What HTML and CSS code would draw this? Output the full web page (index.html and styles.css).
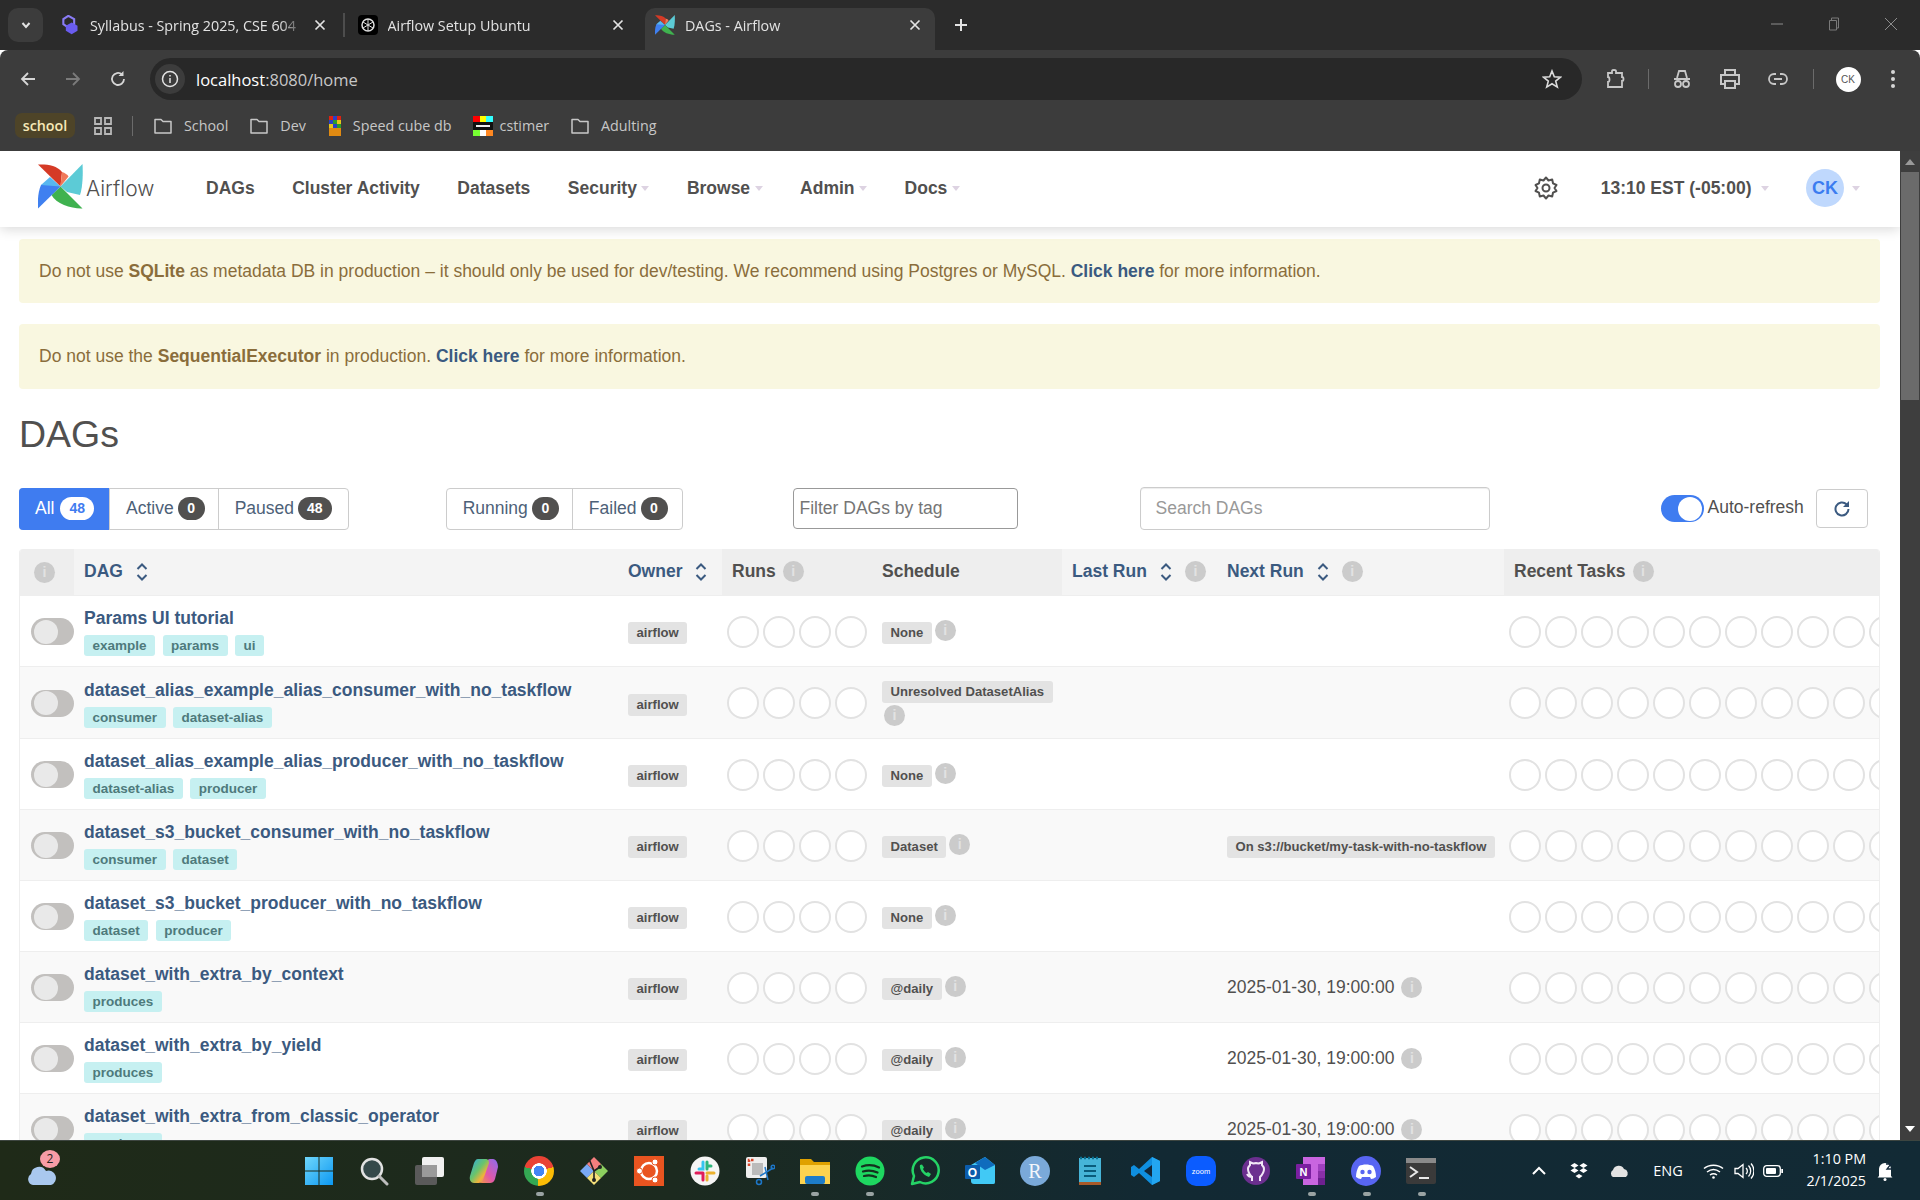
FILE: index.html
```html
<!DOCTYPE html>
<html lang="en">
<head>
    <meta charset="UTF-8">
    <title>DAGs - Airflow</title>
    <link rel="stylesheet" href="styles.css">
</head>
<body>
<svg class="defs" width="0" height="0">
    <defs>
        <symbol id="pinwheel" viewBox="0 0 45 45">
            <path d="M0 0.500C8 0 19 1 24 8L22.500 22.500Z" fill="#d53a26"/>
            <path d="M24 8C27 9 29.500 10.500 30.500 12.500L22.500 22.500Z" fill="#f0795a"/>
            <path d="M44.500 0L22.500 22.500L29 28L42 31C45 22 45 8 44.500 0Z" fill="#5ccbd6"/>
            <path d="M44.500 44.500L22.500 22.500L13.500 31C18 40 34 45 44.500 44.500Z" fill="#3fb24f"/>
            <path d="M0 44.500L22.500 22.500L12 18L3 21C0 28 -0.500 37 0 44.500Z" fill="#3f80f0"/>
            <path d="M3 21L12 13L22.500 22.500Z" fill="#58b7f0"/>
        </symbol>
        <symbol id="folder" viewBox="0 0 20 20">
            <path d="M2 3.500H8L10 5.500H18V17H2Z" fill="none" stroke="#c7c7c7" stroke-width="1.500" stroke-linejoin="round"/>
        </symbol>
        <symbol id="sort" viewBox="0 0 12 20">
            <path d="M1.500 7L6 2.500L10.500 7M1.500 13L6 17.500L10.500 13" fill="none" stroke="#3b5a80" stroke-width="2"/>
        </symbol>
        <symbol id="close-x" viewBox="0 0 12 12">
            <path d="M1.500 1.500L10.500 10.500M10.500 1.500L1.500 10.500" stroke="#e3e3e3" stroke-width="1.700"/>
        </symbol>
    </defs>
</svg>

<div class="window">
    <!-- tab strip -->
    <div class="tabstrip">
        <div class="tab-menu">
            <svg width="12" height="12" viewBox="0 0 12 12"><path d="M2.500 4L6 8L9.500 4" fill="none" stroke="#e3e3e3" stroke-width="2"/></svg>
        </div>
        <div class="tab">
            <svg class="favicon" viewBox="0 0 20 24"><path d="M8 1L15 5V11L8 15L2 11V5Z" fill="none" stroke="#8a7cf5" stroke-width="2.500"/><path d="M12 9L19 13V19L12 23L5 19V13Z" fill="#6a5cf0"/></svg>
            <span class="tab-title">Syllabus - Spring 2025, CSE 604</span>
            <svg class="tab-close"><use href="#close-x"/></svg>
        </div>
        <span class="tab-sep"></span>
        <div class="tab">
            <svg class="favicon" viewBox="0 0 20 20"><rect width="20" height="20" rx="4" fill="#000"/><circle cx="10" cy="10" r="6" fill="none" stroke="#ddd" stroke-width="1.500"/><path d="M10 4V16M5 7L15 13M15 7L5 13" stroke="#ddd"/></svg>
            <span class="tab-title">Airflow Setup Ubuntu</span>
            <svg class="tab-close"><use href="#close-x"/></svg>
        </div>
        <span class="tab-sep tab-sep-off"></span>
        <div class="tab tab-active">
            <svg class="favicon"><use href="#pinwheel"/></svg>
            <span class="tab-title">DAGs - Airflow</span>
            <svg class="tab-close"><use href="#close-x"/></svg>
        </div>
        <svg class="tab-new" width="16" height="16" viewBox="0 0 16 16"><path d="M8 2V14M2 8H14" stroke="#e3e3e3" stroke-width="2"/></svg>
        <div class="win-controls">
            <span class="win-btn"><svg width="12" height="12" viewBox="0 0 12 12"><path d="M0 6H12" stroke="#8d8d8d"/></svg></span>
            <span class="win-btn"><svg width="12" height="14" viewBox="0 0 12 14"><path d="M1.500 3.500H8.500V13H1.500ZM3.500 3.500V1H10.500V11H8.500" fill="none" stroke="#7a7a7a"/></svg></span>
            <span class="win-btn"><svg width="14" height="14" viewBox="0 0 14 14"><path d="M1 1L13 13M13 1L1 13" stroke="#8d8d8d"/></svg></span>
        </div>
    </div>

    <!-- toolbar -->
    <div class="toolbar">
        <span class="nav-btn"><svg width="18" height="18" viewBox="0 0 18 18"><path d="M16 9H3M9 3L3 9L9 15" fill="none" stroke="#d6d6d6" stroke-width="1.800"/></svg></span>
        <span class="nav-btn"><svg width="18" height="18" viewBox="0 0 18 18"><path d="M2 9H15M9 3L15 9L9 15" fill="none" stroke="#7b7b7b" stroke-width="1.800"/></svg></span>
        <span class="nav-btn"><svg width="18" height="18" viewBox="0 0 18 18"><path d="M15 9A6 6 0 1 1 13 4.500" fill="none" stroke="#d6d6d6" stroke-width="1.800"/><path d="M14.500 1V6H9.500Z" fill="#d6d6d6"/></svg></span>
        <div class="omnibox">
            <span class="omni-info"><svg width="18" height="18" viewBox="0 0 18 18"><circle cx="9" cy="9" r="7.500" fill="none" stroke="#e3e3e3" stroke-width="1.500"/><path d="M9 8V13M9 5V6.500" stroke="#e3e3e3" stroke-width="1.500"/></svg></span>
            <span class="omni-url">localhost<span class="omni-dim">:8080/home</span></span>
            <svg class="omni-star" width="20" height="20" viewBox="0 0 20 20"><path d="M10 2L12.300 7.800L18.500 8.200L13.700 12.100L15.300 18.100L10 14.800L4.700 18.100L6.300 12.100L1.500 8.200L7.700 7.800Z" fill="none" stroke="#dcdcdc" stroke-width="1.600"/></svg>
        </div>
        <div class="tool-icons">
            <span class="tool-btn"><svg width="22" height="22" viewBox="0 0 22 22"><path d="M4 5H8V3C8 1.500 12 1.500 12 3V5H18V9C20 9 20 13 18 13V19H4V14C6 14 6 9 4 9Z" fill="none" stroke="#c7c7c7" stroke-width="1.800"/></svg></span>
            <span class="tool-sep"></span>
            <div class="tool-group">
                <span class="tool-btn"><svg width="22" height="22" viewBox="0 0 22 22"><path d="M6 10L8 3H14L16 10M3 11H19" fill="none" stroke="#c7c7c7" stroke-width="1.800"/><circle cx="7" cy="16" r="3" fill="none" stroke="#c7c7c7" stroke-width="1.800"/><circle cx="15" cy="16" r="3" fill="none" stroke="#c7c7c7" stroke-width="1.800"/></svg></span>
                <span class="tool-btn"><svg width="22" height="22" viewBox="0 0 22 22"><path d="M6 7V2H16V7M6 16H2V7H20V16H16M6 13H16V20H6Z" fill="none" stroke="#c7c7c7" stroke-width="2"/></svg></span>
                <span class="tool-btn"><svg width="22" height="22" viewBox="0 0 22 22"><path d="M9 6H7A5 5 0 0 0 7 16H9M13 6H15A5 5 0 0 1 15 16H13M7 11H15" fill="none" stroke="#c7c7c7" stroke-width="1.800"/></svg></span>
            </div>
            <span class="tool-sep tool-sep-b"></span>
            <span class="tool-btn tool-avatar"><span class="profile-dot">CK</span></span>
            <span class="tool-btn tool-kebab"><svg width="6" height="20" viewBox="0 0 6 20"><circle cx="3" cy="3" r="2" fill="#d6d6d6"/><circle cx="3" cy="10" r="2" fill="#d6d6d6"/><circle cx="3" cy="17" r="2" fill="#d6d6d6"/></svg></span>
        </div>
    </div>

    <!-- bookmarks -->
    <div class="bookmarks">
        <span class="bm-chip">school</span>
        <svg class="bm-apps" width="20" height="20" viewBox="0 0 20 20"><path d="M2 2H8V8H2ZM12 2H18V8H12ZM2 12H8V18H2ZM12 12H18V18H12Z" fill="none" stroke="#b8b8b8" stroke-width="1.800"/></svg>
        <span class="bm-sep"></span>
        <span class="bm-item"><svg class="bm-icon"><use href="#folder"/></svg>School</span>
        <span class="bm-item"><svg class="bm-icon"><use href="#folder"/></svg>Dev</span>
        <span class="bm-item">
            <svg class="bm-favicon-sm" viewBox="0 0 3 5"><rect width="1" height="1" fill="#d21"/><rect x="1" width="1" height="1" fill="#2a3ec9"/><rect x="2" width="1" height="1" fill="#d21"/><rect y="1" width="1" height="1" fill="#2a3ec9"/><rect x="1" y="1" width="1" height="1" fill="#2c9b2c"/><rect x="2" y="1" width="1" height="1" fill="#e6c619"/><rect y="2" width="1" height="1" fill="#e6c619"/><rect x="1" y="2" width="1" height="1" fill="#2a3ec9"/><rect x="2" y="2" width="1" height="1" fill="#2c9b2c"/><rect y="3" width="3" height="2" fill="#e08a12"/></svg>
            Speed cube db
        </span>
        <span class="bm-item">
            <svg class="bm-favicon" viewBox="0 0 20 20"><rect width="7" height="6" fill="#f00"/><rect x="7" width="6" height="6" fill="#ff0"/><rect x="13" width="7" height="6" fill="#3ff"/><rect y="6" width="20" height="8" fill="#111"/><rect x="3" y="9" width="14" height="2" fill="#eee"/><rect y="14" width="7" height="6" fill="#7f3"/><rect x="7" y="14" width="6" height="6" fill="#fff"/><rect x="13" y="14" width="7" height="6" fill="#f82"/></svg>
            cstimer
        </span>
        <span class="bm-item"><svg class="bm-icon"><use href="#folder"/></svg>Adulting</span>
    </div>

    <div class="viewport">
        <div class="page">
            <nav class="navbar">
                <div class="brand">
                    <svg class="brand-logo"><use href="#pinwheel"/></svg>
                    <span class="brand-name">Airflow</span>
                </div>
                <div class="nav-links">
                    <a class="nav-link">DAGs</a>
                    <a class="nav-link">Cluster Activity</a>
                    <a class="nav-link">Datasets</a>
                    <a class="nav-link">Security<i class="caret"></i></a>
                    <a class="nav-link">Browse<i class="caret"></i></a>
                    <a class="nav-link">Admin<i class="caret"></i></a>
                    <a class="nav-link">Docs<i class="caret"></i></a>
                </div>
                <div class="nav-right">
                    <svg class="nav-gear" width="24" height="24" viewBox="0 0 24 24"><path d="M12 1.500L14.500 4.500L18.200 3.500L19 7.300L22.500 9L20.500 12L22.500 15L19 16.700L18.200 20.500L14.500 19.500L12 22.500L9.500 19.500L5.800 20.500L5 16.700L1.500 15L3.500 12L1.500 9L5 7.300L5.800 3.500L9.500 4.500Z" fill="none" stroke="#51504f" stroke-width="2" stroke-linejoin="round"/><circle cx="12" cy="12" r="3.500" fill="none" stroke="#51504f" stroke-width="2"/></svg>
                    <span class="nav-time">13:10 EST (-05:00)<i class="caret caret-time"></i></span>
                    <span class="nav-avatar">CK</span>
                    <i class="caret caret-user"></i>
                </div>
            </nav>

            <main class="content">
                <div class="alert">Do not use <b>SQLite</b> as metadata DB in production &ndash; it should only be used for dev/testing. We recommend using Postgres or MySQL. <a class="alert-link">Click here</a> for more information.</div>
                <div class="alert alert-b">Do not use the <b>SequentialExecutor</b> in production. <a class="alert-link">Click here</a> for more information.</div>

                <h1 class="title">DAGs</h1>

                <div class="controls">
                    <div class="btn-group">
                        <span class="seg seg-on">All <b class="count count-on">48</b></span>
                        <span class="seg">Active <b class="count">0</b></span>
                        <span class="seg seg-wide">Paused <b class="count">48</b></span>
                    </div>
                    <div class="btn-group group-status">
                        <span class="seg">Running <b class="count">0</b></span>
                        <span class="seg seg-last">Failed <b class="count">0</b></span>
                    </div>
                    <div class="filter-tag">Filter DAGs by tag</div>
                    <div class="search-box">Search DAGs</div>
                    <span class="switch"><span class="switch-knob"></span></span>
                    <span class="switch-label">Auto-refresh</span>
                    <span class="refresh-btn"><svg width="20" height="20" viewBox="0 0 20 20"><path d="M16.500 10A6.500 6.500 0 1 1 14.500 5.300" fill="none" stroke="#3b5a80" stroke-width="2"/><path d="M17 2V8H11Z" fill="#3b5a80"/></svg></span>
                </div>

                <div class="table-wrap">
                    <table class="dag-table">
                        <colgroup>
                            <col class="col-toggle"><col class="col-dag"><col class="col-owner"><col class="col-runs"><col class="col-sched"><col class="col-last"><col class="col-next"><col class="col-recent">
                        </colgroup>
                        <thead>
                            <tr>
                                <th class="th-dark th-info"><span class="info"><i>i</i></span></th>
                                <th class="th-link"><div class="th-cell">DAG <svg class="sort"><use href="#sort"/></svg></div></th>
                                <th class="th-link"><div class="th-cell th-owner">Owner <svg class="sort"><use href="#sort"/></svg></div></th>
                                <th class="th-dark"><div class="th-cell th-tight">Runs <span class="info"><i>i</i></span></div></th>
                                <th class="th-dark"><div class="th-cell">Schedule</div></th>
                                <th class="th-link"><div class="th-cell">Last Run <svg class="sort"><use href="#sort"/></svg> <span class="info"><i>i</i></span></div></th>
                                <th class="th-link"><div class="th-cell">Next Run <svg class="sort"><use href="#sort"/></svg> <span class="info"><i>i</i></span></div></th>
                                <th class="th-dark"><div class="th-cell th-tight">Recent Tasks <span class="info"><i>i</i></span></div></th>
                            </tr>
                        </thead>
                        <tbody>
                            <tr>
                                <td><span class="dag-switch"></span></td>
                                <td><a class="dag-name">Params UI tutorial</a><div class="tags"><span class="tag">example</span><span class="tag">params</span><span class="tag">ui</span></div></td>
                                <td class="td-label"><span class="label">airflow</span></td>
                                <td><div class="circles"><i></i><i></i><i></i><i></i></div></td>
                                <td class="td-label"><div class="sched"><span class="label">None</span><span class="info info-up"><i>i</i></span></div></td>
                                <td></td>
                                <td></td>
                                <td><div class="circles"><i></i><i></i><i></i><i></i><i></i><i></i><i></i><i></i><i></i><i></i><i></i></div></td>
                            </tr>
                            <tr class="row-tall">
                                <td><span class="dag-switch"></span></td>
                                <td><a class="dag-name">dataset_alias_example_alias_consumer_with_no_taskflow</a><div class="tags"><span class="tag">consumer</span><span class="tag">dataset-alias</span></div></td>
                                <td class="td-label"><span class="label">airflow</span></td>
                                <td><div class="circles"><i></i><i></i><i></i><i></i></div></td>
                                <td><div class="sched"><span class="label">Unresolved DatasetAlias</span><span class="info info-wrapped"><i>i</i></span></div></td>
                                <td></td>
                                <td></td>
                                <td><div class="circles"><i></i><i></i><i></i><i></i><i></i><i></i><i></i><i></i><i></i><i></i><i></i></div></td>
                            </tr>
                            <tr>
                                <td><span class="dag-switch"></span></td>
                                <td><a class="dag-name">dataset_alias_example_alias_producer_with_no_taskflow</a><div class="tags"><span class="tag">dataset-alias</span><span class="tag">producer</span></div></td>
                                <td class="td-label"><span class="label">airflow</span></td>
                                <td><div class="circles"><i></i><i></i><i></i><i></i></div></td>
                                <td class="td-label"><div class="sched"><span class="label">None</span><span class="info info-up"><i>i</i></span></div></td>
                                <td></td>
                                <td></td>
                                <td><div class="circles"><i></i><i></i><i></i><i></i><i></i><i></i><i></i><i></i><i></i><i></i><i></i></div></td>
                            </tr>
                            <tr>
                                <td><span class="dag-switch"></span></td>
                                <td><a class="dag-name">dataset_s3_bucket_consumer_with_no_taskflow</a><div class="tags"><span class="tag">consumer</span><span class="tag">dataset</span></div></td>
                                <td class="td-label"><span class="label">airflow</span></td>
                                <td><div class="circles"><i></i><i></i><i></i><i></i></div></td>
                                <td class="td-label"><div class="sched"><span class="label">Dataset</span><span class="info info-up"><i>i</i></span></div></td>
                                <td></td>
                                <td class="td-label"><span class="label">On s3://bucket/my-task-with-no-taskflow</span></td>
                                <td><div class="circles"><i></i><i></i><i></i><i></i><i></i><i></i><i></i><i></i><i></i><i></i><i></i></div></td>
                            </tr>
                            <tr>
                                <td><span class="dag-switch"></span></td>
                                <td><a class="dag-name">dataset_s3_bucket_producer_with_no_taskflow</a><div class="tags"><span class="tag">dataset</span><span class="tag">producer</span></div></td>
                                <td class="td-label"><span class="label">airflow</span></td>
                                <td><div class="circles"><i></i><i></i><i></i><i></i></div></td>
                                <td class="td-label"><div class="sched"><span class="label">None</span><span class="info info-up"><i>i</i></span></div></td>
                                <td></td>
                                <td></td>
                                <td><div class="circles"><i></i><i></i><i></i><i></i><i></i><i></i><i></i><i></i><i></i><i></i><i></i></div></td>
                            </tr>
                            <tr>
                                <td><span class="dag-switch"></span></td>
                                <td><a class="dag-name">dataset_with_extra_by_context</a><div class="tags"><span class="tag">produces</span></div></td>
                                <td class="td-label"><span class="label">airflow</span></td>
                                <td><div class="circles"><i></i><i></i><i></i><i></i></div></td>
                                <td class="td-label"><div class="sched"><span class="label">@daily</span><span class="info info-up"><i>i</i></span></div></td>
                                <td></td>
                                <td class="td-date"><div class="next-run">2025-01-30, 19:00:00 <span class="info"><i>i</i></span></div></td>
                                <td><div class="circles"><i></i><i></i><i></i><i></i><i></i><i></i><i></i><i></i><i></i><i></i><i></i></div></td>
                            </tr>
                            <tr>
                                <td><span class="dag-switch"></span></td>
                                <td><a class="dag-name">dataset_with_extra_by_yield</a><div class="tags"><span class="tag">produces</span></div></td>
                                <td class="td-label"><span class="label">airflow</span></td>
                                <td><div class="circles"><i></i><i></i><i></i><i></i></div></td>
                                <td class="td-label"><div class="sched"><span class="label">@daily</span><span class="info info-up"><i>i</i></span></div></td>
                                <td></td>
                                <td class="td-date"><div class="next-run">2025-01-30, 19:00:00 <span class="info"><i>i</i></span></div></td>
                                <td><div class="circles"><i></i><i></i><i></i><i></i><i></i><i></i><i></i><i></i><i></i><i></i><i></i></div></td>
                            </tr>
                            <tr>
                                <td><span class="dag-switch"></span></td>
                                <td><a class="dag-name">dataset_with_extra_from_classic_operator</a><div class="tags"><span class="tag">produces</span></div></td>
                                <td class="td-label"><span class="label">airflow</span></td>
                                <td><div class="circles"><i></i><i></i><i></i><i></i></div></td>
                                <td class="td-label"><div class="sched"><span class="label">@daily</span><span class="info info-up"><i>i</i></span></div></td>
                                <td></td>
                                <td class="td-date"><div class="next-run">2025-01-30, 19:00:00 <span class="info"><i>i</i></span></div></td>
                                <td><div class="circles"><i></i><i></i><i></i><i></i><i></i><i></i><i></i><i></i><i></i><i></i><i></i></div></td>
                            </tr>
                        </tbody>
                    </table>
                </div>
            </main>
        </div>
        <div class="scrollbar">
            <span class="scroll-up"></span>
            <span class="scroll-thumb"></span>
            <span class="scroll-down"></span>
        </div>
    </div>

    <!-- windows taskbar -->
    <footer class="taskbar">
        <div class="weather">
            <svg width="32" height="22" viewBox="0 0 32 22"><path d="M8 21A6 6 0 0 1 6 10A8 8 0 0 1 21 7A7 7 0 0 1 26 21Z" fill="#a9c8ee"/></svg>
            <span class="weather-badge">2</span>
        </div>
        <div class="task-icons">
            <span class="task-item"><svg class="ti" viewBox="0 0 30 30"><defs><linearGradient id="win" x1="0" y1="0" x2="1" y2="1"><stop offset="0" stop-color="#6fd6fb"/><stop offset="1" stop-color="#0c98f2"/></linearGradient></defs><path d="M1 1H14.500V14.500H1ZM15.500 1H29V14.500H15.500ZM1 15.500H14.500V29H1ZM15.500 15.500H29V29H15.500Z" fill="url(#win)"/></svg></span>
            <span class="task-item"><svg class="ti" viewBox="0 0 30 30"><circle cx="13" cy="13" r="10" fill="#35494a" stroke="#e2e2e2" stroke-width="2.500"/><path d="M20 20L28 28" stroke="#bdbdbd" stroke-width="3" stroke-linecap="round"/></svg></span>
            <span class="task-item"><svg class="ti" viewBox="0 0 30 30"><rect x="1" y="9" width="22" height="20" rx="2" fill="#5a5a5a"/><rect x="8" y="1" width="22" height="20" rx="2" fill="#f0f0f0"/><rect x="8" y="9" width="15" height="12" fill="#9a9a9a"/></svg></span>
            <span class="task-item"><svg class="ti" viewBox="0 0 30 30"><defs><linearGradient id="cop" x1="0" y1="0" x2="1" y2="1"><stop offset="0" stop-color="#27a8e8"/><stop offset=".45" stop-color="#6bc46a"/><stop offset=".7" stop-color="#f2b23a"/><stop offset="1" stop-color="#d55bb0"/></linearGradient><linearGradient id="cop2" x1="1" y1="0" x2="0" y2="1"><stop offset="0" stop-color="#8a6cf0"/><stop offset=".6" stop-color="#e257a8"/><stop offset="1" stop-color="#f59a3c"/></linearGradient></defs><path d="M21 3H24C27 3 29 7 29 11L26 23C25 26 23 27 21 27H13C11 27 10 25 11 23L17 7C18 5 19 3 21 3Z" fill="url(#cop2)"/><path d="M9 3H17C19 3 20 5 20 7L14 24C13 27 11 27 8 27H5C2 27 0 24 1 20L5 7C6 5 7 3 9 3Z" fill="url(#cop)"/></svg></span>
            <span class="task-item has-dot"><span class="chrome-ic"></span></span>
            <span class="task-item"><svg class="ti" viewBox="0 0 30 30"><path d="M15 15L1 15L8 8L15 15Z M8 8L15 15L8 22L1 15Z" fill="#7aa9f5"/><path d="M15 15L22 8L29 15L22 22Z" fill="#8ccf5f"/><path d="M8 22L15 15L22 22L15 29Z" fill="#f5e079"/><path d="M8 8L15 1L22 8L15 15Z" fill="#f47e7e"/><path d="M10 3L15 15V24M15 15L21 11" stroke="#222" stroke-width="1.600" fill="none"/><circle cx="15" cy="24" r="2" fill="#222"/><circle cx="21" cy="11" r="2" fill="#222"/></svg></span>
            <span class="task-item"><svg class="ti" viewBox="0 0 30 30"><rect width="30" height="30" fill="#e95420"/><circle cx="15" cy="15" r="8" fill="none" stroke="#fff" stroke-width="2.500"/><circle cx="21" cy="6" r="3" fill="#fff" stroke="#e95420"/><circle cx="21" cy="24" r="3" fill="#fff" stroke="#e95420"/><circle cx="5.500" cy="15" r="3" fill="#fff" stroke="#e95420"/></svg></span>
            <span class="task-item"><svg class="ti" viewBox="0 0 30 30"><circle cx="15" cy="15" r="14.500" fill="#f5f5f5"/><path d="M13 6V13H9" stroke="#36c5f0" stroke-width="3" stroke-linecap="round" fill="none"/><path d="M17 6V13M17 10H21" stroke="#2eb67d" stroke-width="3" stroke-linecap="round" fill="none"/><path d="M6 17H13M13 17V24" stroke="#e01e5a" stroke-width="3" stroke-linecap="round" fill="none"/><path d="M17 17H24M17 24V20" stroke="#ecb22e" stroke-width="3" stroke-linecap="round" fill="none"/></svg></span>
            <span class="task-item"><svg class="ti" viewBox="0 0 30 30"><rect x="1" y="1" width="21" height="21" rx="2" fill="#eee"/><path d="M4 10V4H10" stroke="#d8462a" stroke-width="2.500" stroke-dasharray="2.500 1.500" fill="none"/><rect x="7" y="7" width="11" height="12" fill="#bbb"/><path d="M15 20L28 12M20 11L23 24" stroke="#1d77c9" stroke-width="1.500"/><circle cx="14" cy="26" r="2.500" fill="none" stroke="#1d77c9" stroke-width="1.500"/><circle cx="28" cy="11" r="1.800" fill="none" stroke="#1d77c9" stroke-width="1.500"/></svg></span>
            <span class="task-item has-dot"><svg class="ti" viewBox="0 0 30 30"><path d="M0 3H11L14 6H30V12H0Z" fill="#dfa100"/><path d="M0 9H30V28H0Z" fill="#fcd34f"/><rect x="9" y="20" width="20" height="8" rx="2" fill="#1d7cc8" transform="translate(-4 0)"/></svg></span>
            <span class="task-item has-dot"><svg class="ti" viewBox="0 0 30 30"><circle cx="15" cy="15" r="14.500" fill="#1ed760"/><path d="M7 10.500C13 8.500 19 9 24 11.500M8 15.500C13 14 18 14.500 22.500 16.500M9 20C13 19 17.500 19.300 21 21" stroke="#14301e" stroke-width="2.200" stroke-linecap="round" fill="none"/></svg></span>
            <span class="task-item"><svg class="ti" viewBox="0 0 30 30"><path d="M2 28L4 20A13 13 0 1 1 10 26Z" fill="none" stroke="#25d366" stroke-width="2.500" stroke-linejoin="round"/><path d="M10 9C9 12 12 19 19 21L21 18L18 16L16.500 17C15 16 13.500 14.500 13 13L14 11.500L12 8.500Z" fill="#25d366"/></svg></span>
            <span class="task-item"><svg class="ti" viewBox="0 0 30 30"><path d="M6 9L20 1L30 9V26C30 28 29 28 27 28H9C7 28 6 27 6 25Z" fill="#41c9f5"/><path d="M10 7L20 1L30 9L20 14Z" fill="#0f6cbd"/><rect y="9" width="15" height="14" rx="1" fill="#0b5cab"/><text class="ti-o" x="7.500" y="21" text-anchor="middle">O</text></svg></span>
            <span class="task-item"><svg class="ti" viewBox="0 0 30 30"><circle cx="15" cy="15" r="15" fill="#7aa9d9"/><text class="ti-r" x="15" y="22" text-anchor="middle">R</text></svg></span>
            <span class="task-item"><svg class="ti" viewBox="0 0 30 30"><rect x="3" y="2" width="22" height="27" fill="#46b4d8"/><rect x="3" y="26" width="22" height="3" fill="#a85a2a"/><path d="M8 10H20M8 15H20M8 20H20" stroke="#0a5c7c" stroke-width="2"/><path d="M4 2H24" stroke="#0a6f8f" stroke-width="2.500" stroke-dasharray="2 2"/></svg></span>
            <span class="task-item"><svg class="ti" viewBox="0 0 30 30"><path d="M21 1L29 5V25L21 29L8 17L3 21L0 19V11L3 9L8 13Z" fill="#0f8fe0"/><path d="M21 9L13 15L21 21Z" fill="#12283a"/><path d="M21 1L29 5V25L21 29Z" fill="#23a6f0"/></svg></span>
            <span class="task-item"><svg class="ti" viewBox="0 0 30 30"><rect width="30" height="30" rx="10" fill="#0b5cff"/><text class="ti-zoom" x="15" y="18" text-anchor="middle">zoom</text></svg></span>
            <span class="task-item"><svg class="ti" viewBox="0 0 30 30"><circle cx="15" cy="15" r="14" fill="#6b2f8f"/><path d="M11 25V21C8 21 7 20 6 18M19 25V21C21 19 23 17 23 13C23 11 22 10 21 9V6L18 7.500C16 7 14 7 12 7.500L9 6V9C8 10 7 11 7 13C7 17 9 19 11 21" fill="none" stroke="#f1e7f6" stroke-width="2"/></svg></span>
            <span class="task-item has-dot"><svg class="ti" viewBox="0 0 30 30"><rect x="7" y="1" width="22" height="28" fill="#c965e0"/><rect x="22" y="8" width="7" height="7" fill="#a040c0"/><rect x="22" y="15" width="7" height="7" fill="#8a2fa8"/><rect x="22" y="22" width="7" height="7" fill="#6e2090"/><rect y="8" width="15" height="15" rx="1" fill="#7a1fa0"/><text class="ti-n" x="7.500" y="20" text-anchor="middle">N</text></svg></span>
            <span class="task-item has-dot"><svg class="ti" viewBox="0 0 30 30"><circle cx="15" cy="15" r="15" fill="#5865f2"/><path d="M8 10C12 8 18 8 22 10C24 13 25 17 25 21C23 22 22 23 20 23L19 21H11L10 23C8 23 7 22 5 21C5 17 6 13 8 10Z" fill="#fff"/><circle cx="11.500" cy="16" r="2.200" fill="#5865f2"/><circle cx="18.500" cy="16" r="2.200" fill="#5865f2"/></svg></span>
            <span class="task-item has-dot"><svg class="ti" viewBox="0 0 30 30"><rect y="2" width="30" height="26" rx="2" fill="#3a3a3a"/><rect y="2" width="30" height="5" fill="#8a8a8a"/><path d="M4 11L11 16L4 21" fill="none" stroke="#e8e8e8" stroke-width="2"/><path d="M13 22H23" stroke="#e8e8e8" stroke-width="2"/></svg></span>
        </div>
        <div class="tray">
            <span class="tray-item"><svg width="16" height="10" viewBox="0 0 16 10"><path d="M2 8L8 2L14 8" fill="none" stroke="#fff" stroke-width="2"/></svg></span>
            <span class="tray-item"><svg width="18" height="16" viewBox="0 0 18 16"><path d="M4.500 0L8.500 2.500L4.500 5L0.500 2.500ZM13.500 0L17.500 2.500L13.500 5L9.500 2.500ZM4.500 5L8.500 7.500L4.500 10L0.500 7.500ZM13.500 5L17.500 7.500L13.500 10L9.500 7.500ZM9 11L12.500 13L9 15.500L5.500 13Z" fill="#fff"/></svg></span>
            <span class="tray-item"><svg width="21" height="14" viewBox="0 0 21 14"><path d="M4 13A4 4 0 0 1 4 6A6 6 0 0 1 15 5A4.500 4.500 0 0 1 17 13Z" fill="#e3e3e3"/></svg></span>
            <span class="tray-item tray-lang">ENG</span>
            <span class="tray-item tray-wifi"><svg width="21" height="16" viewBox="0 0 21 16"><path d="M1 5.500C6 1 15 1 20 5.500M4 9C8 6 13 6 17 9M7 12C9 10.500 12 10.500 14 12" fill="none" stroke="#fff" stroke-width="1.500"/><circle cx="10.500" cy="14.500" r="1.300" fill="#fff"/></svg></span>
            <span class="tray-item tray-sound"><svg width="20" height="18" viewBox="0 0 20 18"><path d="M1 6.500H4L9 2.500V15.500L4 11.500H1Z" fill="none" stroke="#fff" stroke-width="1.300"/><path d="M12 6A4 4 0 0 1 12 12M14.500 3.500A8 8 0 0 1 14.500 14.500M17 1.500A11 11 0 0 1 17 16.500" fill="none" stroke="#fff" stroke-width="1.300"/></svg></span>
            <span class="tray-item tray-batt"><svg width="20" height="12" viewBox="0 0 20 12"><rect x=".7" y=".7" width="16.600" height="10.600" rx="3" fill="none" stroke="#fff" stroke-width="1.300"/><rect x="3" y="3" width="10" height="6" rx="1" fill="#fff"/><rect x="18.300" y="4" width="1.700" height="4" fill="#fff"/></svg></span>
            <div class="clock"><span>1:10 PM</span><span>2/1/2025</span></div>
            <span class="tray-item tray-bell"><svg width="16" height="20" viewBox="0 0 16 20"><path d="M2 15V8A6 6 0 0 1 14 8V15L15.500 16.500H.5Z" fill="#fff"/><circle cx="8" cy="18.500" r="1.500" fill="#fff"/><path d="M9 3H14L10 8H15" fill="none" stroke="#12283a" stroke-width="1.300"/></svg></span>
        </div>
    </footer>
</div>
</body>
</html>
```

FILE: styles.css
```css
* {
    box-sizing: border-box;
}
html, body {
    margin: 0;
    padding: 0;
    height: 100%;
    overflow: hidden;
}
body {
    font-family: "Liberation Sans", Arial, sans-serif;
    font-size: 17.5px;
    color: #51504f;
    background-color: #fff;
}
.defs {
    position: absolute;
}
.window {
    display: flex;
    flex-direction: column;
    height: 1200px;
}

/* browser chrome */
.tabstrip {
    display: flex;
    height: 50px;
    padding: 8px 0 0 8px;
    background-color: #2b2b2b;
    color: #e3e3e3;
    font-family: "Open Sans", sans-serif;
    font-size: 14.300px;
}
.tab-menu {
    display: flex;
    align-items: center;
    justify-content: center;
    width: 35px;
    height: 34px;
    margin-right: 7px;
    border-radius: 10px;
    background-color: #3c3c3c;
}
.tab {
    display: flex;
    align-items: center;
    width: 290px;
    height: 34px;
    padding: 0 13px 0 10px;
}
.tab-active {
    height: 42px;
    padding-bottom: 8px;
    background-color: #3c3c3c;
    border-radius: 10px 10px 0 0;
}
.tab-sep {
    width: 1.500px;
    height: 24px;
    margin: 5px 3px;
    background-color: #4d4d4d;
}
.tab-sep-off {
    background-color: transparent;
}
.favicon {
    flex: none;
    width: 20px;
    height: 20px;
    margin-right: 10px;
}
.tab-title {
    flex: 1;
    overflow: hidden;
    white-space: nowrap;
    -webkit-mask-image: linear-gradient(90deg, #000 88%, transparent);
    mask-image: linear-gradient(90deg, #000 88%, transparent);
}
.tab-close {
    flex: none;
    width: 12px;
    height: 12px;
    margin: 0 1px 0 9px;
}
.tab-new {
    margin: 8.500px 0 0 18px;
    align-self: flex-start;
}
.win-controls {
    display: flex;
    margin: -8px 1px 0 auto;
}
.win-btn {
    display: flex;
    align-items: center;
    justify-content: center;
    width: 57px;
    height: 48px;
}
.toolbar {
    display: flex;
    align-items: center;
    height: 50px;
    padding: 8px 0 0 5px;
    background-color: #3c3c3c;
    border-radius: 8px 8px 0 0;
}
.nav-btn {
    display: flex;
    align-items: center;
    justify-content: center;
    width: 45px;
}
.omnibox {
    display: flex;
    align-items: center;
    width: 1432px;
    height: 42px;
    margin-left: 10px;
    padding: 0 20px 0 5px;
    border-radius: 21px;
    background-color: #282828;
    font-family: "Open Sans", sans-serif;
    font-size: 16.500px;
    color: #fff;
}
.omni-info {
    display: flex;
    align-items: center;
    justify-content: center;
    width: 30px;
    height: 30px;
    border-radius: 50%;
    background-color: #3c3c3c;
}
.omni-url {
    margin-left: 11px;
}
.omni-dim {
    color: #c7c7c7;
}
.omni-star {
    margin-left: auto;
}
.tool-icons {
    display: flex;
    align-items: center;
    gap: 13px;
    margin-left: 13px;
}
.tool-group {
    display: flex;
    gap: 8px;
}
.tool-btn {
    display: flex;
    align-items: center;
    justify-content: center;
    width: 40px;
}
.tool-sep {
    width: 1px;
    height: 20px;
    background-color: #6b6b6b;
}
.tool-sep-b {
    margin-left: 2px;
}
.tool-avatar {
    margin-left: 1px;
}
.tool-kebab {
    margin-left: -8px;
}
.profile-dot {
    display: flex;
    align-items: center;
    justify-content: center;
    width: 25px;
    height: 25px;
    border-radius: 50%;
    background-color: #fff;
    font-size: 10px;
    color: #555;
}
.bookmarks {
    display: flex;
    align-items: center;
    gap: 21px;
    height: 51px;
    padding-left: 15px;
    background-color: #3c3c3c;
    font-family: "Open Sans", sans-serif;
    font-size: 14.300px;
    color: #c7c7c7;
}
.bm-chip {
    width: 60px;
    height: 25px;
    margin-right: -3px;
    border-radius: 7px;
    background-color: #4e4428;
    line-height: 25px;
    text-align: center;
    font-weight: 600;
    color: #f7e9b8;
}
.bm-apps {
    margin-right: -2px;
}
.bm-sep {
    width: 1px;
    height: 20px;
    margin-right: -1px;
    background-color: #6b6b6b;
}
.bm-item {
    display: flex;
    align-items: center;
}
.bm-icon {
    width: 20px;
    height: 20px;
    margin-right: 11px;
}
.bm-favicon-sm {
    width: 16px;
    height: 20px;
    margin-right: 10px;
}
.bm-favicon {
    width: 20px;
    height: 20px;
    margin-right: 7px;
}

/* airflow page */
.viewport {
    flex: 1;
    display: flex;
    min-height: 0;
}
.page {
    flex: 1;
    min-width: 0;
    overflow: hidden;
}
.navbar {
    display: flex;
    align-items: center;
    position: relative;
    height: 76px;
    padding: 0 0 2px 38px;
    background-color: #fff;
    box-shadow: 0 2px 12px rgba(0, 0, 0, 0.16);
}
.brand {
    display: flex;
    align-items: center;
    width: 168px;
}
.brand-logo {
    width: 45px;
    height: 45px;
    margin-bottom: 3px;
}
.brand-name {
    margin-left: 3px;
    font-family: Inter, sans-serif;
    font-size: 21px;
    font-weight: 300;
    color: #51504f;
}
.nav-links {
    display: flex;
    align-items: center;
    gap: 37.500px;
}
.nav-link {
    font-weight: bold;
    color: #51504f;
}
.caret {
    display: inline-block;
    width: 0;
    height: 0;
    margin-left: 4.500px;
    vertical-align: middle;
    border-left: 4.500px solid transparent;
    border-right: 4.500px solid transparent;
    border-top: 5px solid #ddd3e2;
}
.nav-right {
    display: flex;
    align-items: center;
    margin-left: auto;
    padding-right: 40px;
}
.nav-time {
    margin-left: 43px;
    font-weight: bold;
    white-space: nowrap;
}
.caret-time {
    margin-left: 9.500px;
}
.nav-avatar {
    display: flex;
    align-items: center;
    justify-content: center;
    width: 38px;
    height: 38px;
    margin-left: 37px;
    border-radius: 50%;
    background-color: #bfd8fd;
    font-weight: bold;
    font-size: 18px;
    color: #3b7cf0;
}
.caret-user {
    margin-left: 8px;
}
.content {
    padding: 12px 20px 0 19px;
}
.alert {
    height: 64px;
    padding: 0 20px;
    border-radius: 4px;
    background-color: #f9f7e0;
    line-height: 64px;
    color: #8a6d3b;
    white-space: nowrap;
}
.alert-b {
    height: 65px;
    margin-top: 21px;
    line-height: 65px;
}
.alert-link {
    font-weight: bold;
    color: #3b5a80;
}
.title {
    margin: 25px 0 32px;
    font-size: 37.500px;
    font-weight: normal;
    line-height: 41px;
    color: #51504f;
}
.controls {
    display: flex;
    align-items: center;
    height: 43px;
}
.btn-group {
    display: flex;
    height: 42px;
    border: 1px solid #ccc;
    border-radius: 4px;
}
.group-status {
    margin-left: 97px;
}
.seg {
    display: flex;
    align-items: center;
    padding: 0 13px 0 16px;
    border-left: 1px solid #ccc;
    color: #4d6178;
    white-space: nowrap;
}
.seg:first-child {
    border-left: 0;
}
.seg-on {
    margin: -1px 0 -1px -1px;
    padding-right: 15px;
    border-radius: 4px 0 0 4px;
    background-color: #3f7cf0;
    color: #fff;
}
.seg-wide {
    padding-right: 16px;
}
.seg-last {
    padding-right: 14px;
}
.count {
    min-width: 27px;
    height: 23px;
    margin-left: 4px;
    padding: 0 9px;
    border-radius: 12px;
    background-color: #51504f;
    font-size: 14px;
    line-height: 23px;
    text-align: center;
    color: #fff;
}
.count-on {
    margin-left: 6px;
    background-color: #fff;
    color: #3f7cf0;
}
.filter-tag {
    width: 225px;
    height: 41px;
    margin-left: 110px;
    padding-left: 6px;
    border: 1px solid #999;
    border-radius: 4px;
    line-height: 39px;
    color: #757575;
}
.search-box {
    width: 350px;
    height: 43px;
    margin-left: 122px;
    padding-left: 15px;
    border: 1px solid #ccc;
    border-radius: 4px;
    box-shadow: inset 0 1px 1px rgba(0, 0, 0, 0.075);
    line-height: 41px;
    color: #999;
}
.switch {
    display: flex;
    align-items: center;
    justify-content: flex-end;
    width: 43px;
    height: 27px;
    margin-left: 171px;
    padding-right: 2px;
    border-radius: 14px;
    background-color: #3f7cf0;
}
.switch-knob {
    width: 24px;
    height: 24px;
    border-radius: 50%;
    background-color: #fff;
}
.switch-label {
    margin-left: 4px;
    margin-top: -3px;
}
.refresh-btn {
    display: flex;
    align-items: center;
    justify-content: center;
    width: 52px;
    height: 39px;
    margin-left: 12px;
    border: 1px solid #ccc;
    border-radius: 4px;
}
.table-wrap {
    margin-top: 19px;
    overflow: hidden;
    border-left: 1px solid #eee;
    border-right: 1px solid #eee;
    border-radius: 4px 4px 0 0;
}
.dag-table {
    table-layout: fixed;
    width: 1859px;
    border-collapse: collapse;
}
.col-toggle { width: 54px; }
.col-dag { width: 546px; }
.col-owner { width: 102px; }
.col-runs { width: 150px; }
.col-sched { width: 190px; }
.col-last { width: 155px; }
.col-next { width: 287px; }
.col-recent { width: 375px; }
.dag-table th {
    height: 46px;
    padding: 0 0 0 10px;
    background-color: #f4f4f4;
    text-align: left;
    white-space: nowrap;
    font-size: 17.500px;
}
.dag-table th.th-dark {
    background-color: #eee;
    color: #51504f;
}
.dag-table th.th-link {
    color: #3b5a80;
}
.dag-table th.th-info {
    padding-left: 14px;
}
.th-cell {
    display: flex;
    align-items: center;
    gap: 13px;
}
.th-owner {
    margin-left: -2px;
}
.th-tight {
    gap: 7px;
}
.dag-table td {
    height: 71px;
    padding: 2px 0 0 10px;
    border-top: 1px solid #eee;
    vertical-align: middle;
    overflow: hidden;
}
.dag-table td.td-label {
    padding-top: 4px;
}
.dag-table td.td-date {
    padding-top: 1px;
}
.dag-table td:first-child {
    padding-left: 11px;
}
.dag-table tbody tr:nth-child(even) td {
    background-color: #f9f9f9;
}
.dag-table .row-tall td {
    height: 72px;
}
.sort {
    width: 12px;
    height: 20px;
}
.info {
    display: inline-block;
    flex: none;
    width: 21px;
    height: 21px;
    border-radius: 50%;
    background-color: #cbcbcb;
    text-align: center;
    font-size: 14px;
    font-weight: bold;
    line-height: 21px;
    color: #e2e2e2;
}
.info i {
    font-style: normal;
}
.dag-switch {
    display: flex;
    align-items: center;
    width: 43px;
    height: 27px;
    padding-left: 3px;
    border-radius: 14px;
    background-color: #c2c0be;
}
.dag-switch::before {
    content: "";
    width: 24px;
    height: 24px;
    border-radius: 50%;
    background-color: #e9e9e9;
}
.dag-name {
    display: block;
    font-size: 17.500px;
    font-weight: bold;
    line-height: 22px;
    color: #3b5a80;
    white-space: nowrap;
}
.tags {
    display: flex;
    gap: 7.500px;
    margin-top: 6px;
}
.tag {
    height: 21px;
    padding: 0 8.500px;
    border-radius: 3px;
    background-color: #c6f0f1;
    font-size: 13.500px;
    font-weight: bold;
    line-height: 21px;
    color: #4e7a7c;
}
.label {
    display: inline-block;
    height: 22px;
    padding: 0 8.500px;
    border-radius: 3px;
    background-color: #e3e3e3;
    font-size: 13.100px;
    font-weight: bold;
    line-height: 22px;
    color: #51504f;
    white-space: nowrap;
}
.dag-table td:nth-child(3) .label {
    margin-left: -2px;
}
.circles {
    display: flex;
    gap: 4px;
    margin-left: -5px;
}
.circles i {
    flex: none;
    width: 32px;
    height: 32px;
    border: 2px solid #e2e2e2;
    border-radius: 50%;
    background-color: #fff;
}
.sched {
    display: flex;
    flex-wrap: wrap;
}
.info-up {
    margin: -2px 0 0 3px;
}
.info-wrapped {
    margin: 2px 0 0 2px;
}
.next-run {
    display: flex;
    align-items: center;
    gap: 7px;
    white-space: nowrap;
}

/* scrollbar */
.scrollbar {
    position: relative;
    flex: none;
    width: 20px;
    background-color: #3e3e3e;
}
.scroll-thumb {
    position: absolute;
    top: 21px;
    left: 1px;
    width: 18px;
    height: 228px;
    background-color: #6b6b6b;
}
.scroll-up,
.scroll-down {
    position: absolute;
    left: 5px;
    width: 0;
    height: 0;
    border-left: 5px solid transparent;
    border-right: 5px solid transparent;
}
.scroll-up {
    top: 8px;
    border-bottom: 6px solid #9a9a9a;
}
.scroll-down {
    bottom: 8px;
    border-top: 6px solid #fff;
}

/* windows taskbar */
.taskbar {
    display: flex;
    align-items: center;
    flex: none;
    height: 60px;
    border-top: 1px solid #3d4540;
    background: linear-gradient(90deg, #1f2a18, #1c2a1f 35%, #122933 60%, #122a35);
    color: #fff;
    font-family: "Open Sans", sans-serif;
}
.weather {
    position: relative;
    flex: none;
    width: 291px;
    height: 59px;
    padding: 23px 0 0 25px;
}
.weather-badge {
    position: absolute;
    top: 9px;
    left: 40px;
    width: 20px;
    height: 18px;
    border-radius: 50%;
    background-color: #f79ca6;
    font-size: 12px;
    line-height: 18px;
    text-align: center;
    color: #222;
}
.task-icons {
    display: flex;
}
.task-item {
    position: relative;
    display: flex;
    align-items: center;
    justify-content: center;
    width: 55.150px;
    height: 59px;
}
.ti {
    width: 30px;
    height: 30px;
}
.has-dot::after {
    content: "";
    position: absolute;
    left: 24px;
    bottom: 4px;
    width: 8px;
    height: 4px;
    border-radius: 2px;
    background-color: #9aa3a3;
}
.chrome-ic {
    width: 30px;
    height: 30px;
    border-radius: 50%;
    background:
        radial-gradient(circle, #4285f4 0 5.500px, #fff 5.500px 7.500px, transparent 8px),
        conic-gradient(#ea4335 0 75deg, #fbbc05 75deg 185deg, #34a853 185deg 285deg, #ea4335 285deg);
}
.ti-o {
    font-family: "Liberation Sans", sans-serif;
    font-size: 12px;
    font-weight: bold;
    fill: #fff;
}
.ti-r {
    font-family: "Liberation Serif", serif;
    font-size: 20px;
    fill: #f2f6fb;
}
.ti-zoom {
    font-family: "Liberation Sans", sans-serif;
    font-size: 7.500px;
    fill: #fff;
}
.ti-n {
    font-family: "Liberation Sans", sans-serif;
    font-size: 11px;
    font-weight: bold;
    fill: #fff;
}
.tray {
    display: flex;
    align-items: center;
    margin-left: auto;
    padding-right: 16px;
}
.tray-item {
    display: flex;
    align-items: center;
    justify-content: center;
    width: 40px;
}
.tray-lang {
    width: 58px;
    font-size: 14.500px;
}
.tray-wifi {
    width: 32px;
}
.tray-sound {
    width: 30px;
}
.tray-batt {
    width: 28px;
}
.clock {
    display: flex;
    flex-direction: column;
    align-items: flex-end;
    gap: 4px;
    width: 79px;
    margin-top: -2px;
    font-size: 14.300px;
    line-height: 18px;
}
.tray-bell {
    width: 38px;
}
```
